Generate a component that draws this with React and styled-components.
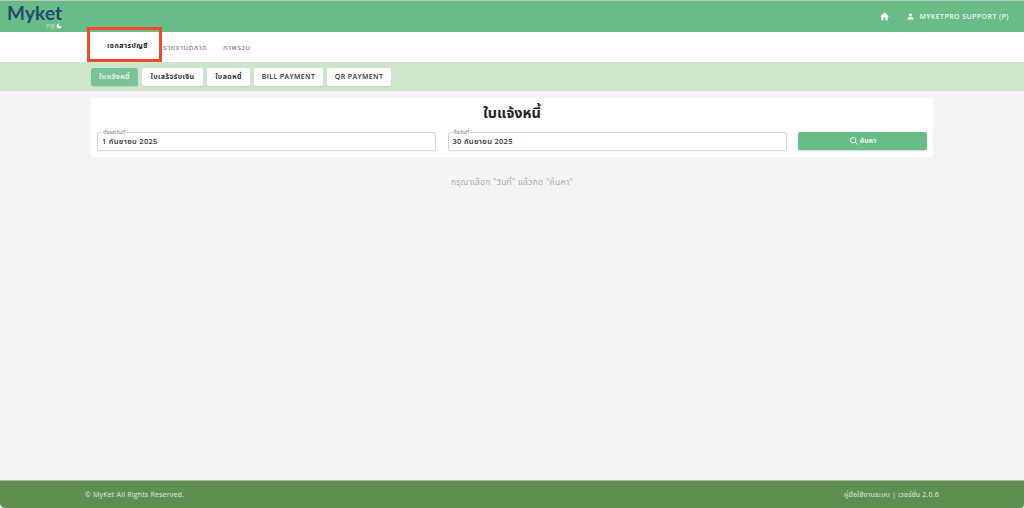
import React from "react";
import styled, { createGlobalStyle } from "styled-components";

const Global = createGlobalStyle`
  html, body { margin: 0; padding: 0; height: 100%; background: #1f3a4a; }
  #root { height: 100%; }
  * { box-sizing: border-box; }
`;
const Page = styled.div`
  width: 1024px; height: 508px; display: flex; flex-direction: column;
  background: #f4f4f4; font-family: "Open Sans", "Noto Sans", "Noto Sans Thai", "DejaVu Sans", sans-serif;
  color: #333; overflow: hidden;
`;
const Header = styled.header`
  height: 32px; flex: none; background: #69bb87; border-top: 1px solid #b9c9bd;
  display: flex; align-items: center; justify-content: space-between; padding: 0 15px 0 7px;
`;
const Logo = styled.div`
  width: 56px; height: 29px; position: relative; margin-top: 1px; flex: none;
`;
const LogoWord = styled.div`
  height: 20px; font-family: "Lato", sans-serif; font-size: 19px; line-height: 19px; font-weight: 700; color: #234a6f; letter-spacing: .15px;
`;
const LogoPro = styled.div`
  position: absolute; right: 1px; top: 20px; display: flex; align-items: center; gap: 1px;
  font-size: 7.5px; line-height: 7px; color: #bfe3cb; letter-spacing: .1px;
`;
const LogoDot = styled.svg`width: 6px; height: 6px; display: block;`;
const UserArea = styled.div`display: flex; align-items: center; color: #f1f8f3; font-size: 7px; font-weight: 600; letter-spacing: .42px;`;
const HomeIcon = styled.svg`width: 11px; height: 11px; fill: #fff; margin-right: 16px;`;
const UserIcon = styled.svg`width: 9px; height: 9px; fill: #fff; margin-right: 4px;`;
const TabBar = styled.nav`
  height: 30px; flex: none; background: #fff; display: flex; align-items: center; padding-left: 91px;
`;
const Tab = styled.div`
  font-size: ${p => p.$active ? "7px" : "7.5px"}; letter-spacing: .45px; white-space: nowrap;
  color: ${p => p.$active ? "#222" : "#777"};
  font-weight: ${p => p.$active ? 700 : 400}; padding: ${p => p.$active ? "0 7px 0 16px" : "0 8px"};
  position: relative; transform: translateY(${p => p.$active ? "-1px" : "0"});
`;
const Highlight = styled.div`
  position: absolute; left: -4px; top: -14px; width: 75px; height: 35px;
  border: 3px solid #f04a2a; pointer-events: none;
`;
const SubBar = styled.div`
  height: 29px; flex: none; background: #cfe5cc; display: flex; align-items: center; padding: 0 0 0 91px;
`;
const SubButton = styled.button`
  height: 18px; width: ${p => p.$w}px; margin-right: ${p => p.$gap}px; border: 0; border-radius: 2px; padding: 0;
  font: inherit; font-size: 7px; font-weight: ${p => p.$latin ? 600 : 700}; letter-spacing: ${p => p.$latin ? ".38px" : ".4px"}; white-space: nowrap;
  color: ${p => p.$active ? "#e4f3e9" : "#333"};
  background: ${p => p.$active ? "#7cc297" : "#fff"}; box-shadow: 0 1px 1px rgba(0,0,0,.08);
`;
const Main = styled.main`flex: 1; padding: 7px 91px 0; display: flex; flex-direction: column; align-items: stretch;`;
const Card = styled.section`
  height: 59px; background: #fff; padding: 4px 6px 0 6px;
`;
const Title = styled.h1`
  margin: 0; text-align: center; font-size: 14.5px; line-height: 22px; font-weight: 700; color: #222;
`;
const FormRow = styled.div`display: grid; grid-template-columns: 339px 339px 129px; column-gap: 11.5px; margin-top: 8px; align-items: start;`;
const Field = styled.div`
  height: 19px; position: relative; border: 1px solid #d8d8d8; border-radius: 2px; padding: 0 4px;
  font-size: 7.5px; line-height: 17px; font-weight: 600; letter-spacing: .3px; color: #333;
  box-shadow: 0 1px 1px rgba(0,0,0,.05);
`;
const FieldLabel = styled.span`
  position: absolute; left: 4px; top: -4px; padding: 0 1px; background: #fff;
  font-size: 5.5px; line-height: 7px; font-weight: 400; letter-spacing: 0; color: #777;
`;
const SearchButton = styled.button`
  height: 18px; border: 0; border-radius: 2px; background: #69bb87; color: #eef8f1;
  display: flex; align-items: center; justify-content: center; gap: 1px; font: inherit; font-size: 7px; font-weight: 700;
  box-shadow: 0 1px 2px rgba(0,0,0,.18);
`;
const SearchIcon = styled.svg`width: 10px; height: 10px; fill: none; stroke: #fff; stroke-width: 2;`;
const Hint = styled.p`
  margin: 19px 0 0; text-align: center; font-size: 8.5px; line-height: 12px; letter-spacing: .25px; color: #aaa;
`;
const Footer = styled.footer`
  height: 28px; flex: none; background: #5e8f51; border-top: 1px solid #a9b5a5;
  border-radius: 0 0 4px 5px; display: flex; align-items: center; justify-content: space-between;
  padding: 0 85px; font-size: 7px; letter-spacing: .2px; color: #e2eede;
`;

export default function App() {
  return (
    <Page>
      <Global />
      <Header>
        <Logo>
          <LogoWord>Myket</LogoWord>
          <LogoPro>PR<LogoDot viewBox="0 0 12 12"><path d="M6 1a5 5 0 1 0 5 5H6Z" fill="#fff" /></LogoDot></LogoPro>
        </Logo>
        <UserArea>
          <HomeIcon viewBox="0 0 24 24"><path d="M10 20v-6h4v6h5v-8h3L12 3 2 12h3v8z" /></HomeIcon>
          <UserIcon viewBox="0 0 24 24"><path d="M12 12c2.200 0 4-1.800 4-4s-1.800-4-4-4-4 1.800-4 4 1.800 4 4 4zm0 2c-2.700 0-8 1.300-8 4v2h16v-2c0-2.700-5.300-4-8-4z" /></UserIcon>
          MYKETPRO SUPPORT (P)
        </UserArea>
      </Header>
      <TabBar>
        <Tab $active>เอกสารบัญชี<Highlight /></Tab>
        <Tab>รายงานตลาด</Tab>
        <Tab>ภาพรวม</Tab>
      </TabBar>
      <SubBar>
        <SubButton $active $w={47} $gap={4}>ใบแจ้งหนี้</SubButton>
        <SubButton $w={61} $gap={4}>ใบเสร็จรับเงิน</SubButton>
        <SubButton $w={43} $gap={4}>ใบลดหนี้</SubButton>
        <SubButton $latin $w={69} $gap={4}>BILL PAYMENT</SubButton>
        <SubButton $latin $w={64} $gap={0}>QR PAYMENT</SubButton>
      </SubBar>
      <Main>
        <Card>
          <Title>ใบแจ้งหนี้</Title>
          <FormRow>
            <Field><FieldLabel>ตั้งแต่วันที่</FieldLabel>1 กันยายน 2025</Field>
            <Field><FieldLabel>ถึงวันที่</FieldLabel>30 กันยายน 2025</Field>
            <SearchButton>
              <SearchIcon viewBox="0 0 24 24"><circle cx="10" cy="10" r="6.500" /><path d="m15 15 6 6" /></SearchIcon>
              ค้นหา
            </SearchButton>
          </FormRow>
        </Card>
        <Hint>กรุณาเลือก "วันที่" แล้วกด "ค้นหา"</Hint>
      </Main>
      <Footer>
        <span>© MyKet All Rights Reserved.</span>
        <span>คู่มือใช้งานระบบ | เวอร์ชั่น 2.0.6</span>
      </Footer>
    </Page>
  );
}
